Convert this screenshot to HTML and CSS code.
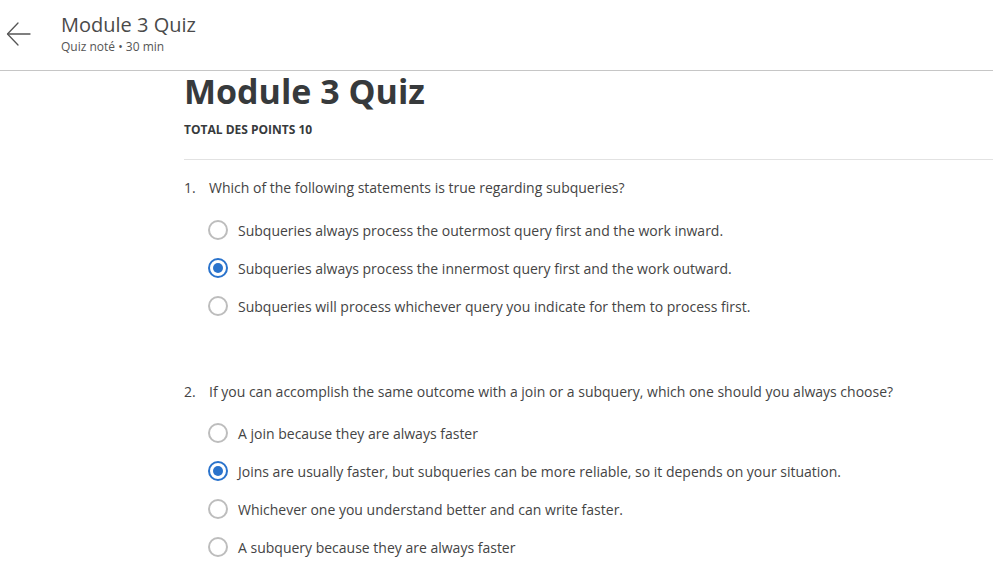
FILE: index.html
```html
<!DOCTYPE html>
<html lang="fr">
<head>
<meta charset="utf-8">
<title>Module 3 Quiz</title>
<link rel="stylesheet" href="styles.css">
</head>
<body>
<header class="topbar">
  <button class="back" aria-label="Retour">
    <svg width="26" height="26" viewBox="0 0 26 26" fill="none" stroke="#555" stroke-width="1.3" stroke-linecap="round" stroke-linejoin="round">
      <path d="M24 13H2"/>
      <path d="M12 2L1.5 13L12 24"/>
    </svg>
  </button>
  <div class="topbar-text">
    <div class="topbar-title">Module 3 Quiz</div>
    <div class="topbar-sub">Quiz noté • 30 min</div>
  </div>
</header>
<main class="content">
  <h1 class="quiz-title">Module 3 Quiz</h1>
  <div class="points">TOTAL DES POINTS 10</div>
  <hr class="sep">
  <section class="question q1">
    <div class="q-head"><span class="q-num">1.</span><span class="q-text">Which of the following statements is true regarding subqueries?</span></div>
    <ul class="options">
      <li class="option"><span class="radio"></span><span>Subqueries always process the outermost query first and the work inward.</span></li>
      <li class="option"><span class="radio checked"></span><span>Subqueries always process the innermost query first and the work outward.</span></li>
      <li class="option"><span class="radio"></span><span>Subqueries will process whichever query you indicate for them to process first.</span></li>
    </ul>
  </section>
  <section class="question q2">
    <div class="q-head"><span class="q-num">2.</span><span class="q-text">If you can accomplish the same outcome with a join or a subquery, which one should you always choose?</span></div>
    <ul class="options">
      <li class="option"><span class="radio"></span><span>A join because they are always faster</span></li>
      <li class="option"><span class="radio checked"></span><span>Joins are usually faster, but subqueries can be more reliable, so it depends on your situation.</span></li>
      <li class="option"><span class="radio"></span><span>Whichever one you understand better and can write faster.</span></li>
      <li class="option"><span class="radio"></span><span>A subquery because they are always faster</span></li>
    </ul>
  </section>
</main>
</body>
</html>
```

FILE: styles.css
```css
* { box-sizing: border-box; }
html, body { margin: 0; padding: 0; background: #fff; }
body {
  font-family: "Open Sans", "Noto Sans", sans-serif;
  color: #444;
  overflow: hidden;
}
.topbar {
  height: 71px;
  border-bottom: 1px solid #c6c6c6;
  display: flex;
  align-items: flex-start;
}
.back {
  border: 0;
  background: none;
  padding: 0;
  margin: 21px 0 0 6px;
  width: 26px;
  height: 26px;
  display: flex;
}
.topbar-text {
  margin: 12px 0 0 29px;
  display: flex;
  flex-direction: column;
}
.topbar-title {
  font-size: 20px;
  line-height: 26px;
  color: #4a4a4a;
}
.topbar-sub {
  font-size: 12px;
  line-height: 16px;
  margin-top: 1px;
  color: #555;
}
.content {
  padding-left: 184px;
}
.quiz-title {
  margin: 0;
  font-size: 34px;
  line-height: 40px;
  font-weight: 700;
  color: #373a3c;
}
.points {
  margin-top: 11px;
  font-size: 12px;
  line-height: 16px;
  font-weight: 700;
  color: #373a3c;
}
.sep {
  margin: 21px 0 0;
  border: 0;
  border-top: 1px solid #e2e2e2;
  height: 0;
}
.question { margin-top: 18px; }
.q2 { margin-top: 66px; }
.q-head {
  display: flex;
  font-size: 14px;
  line-height: 20px;
}
.q-num { width: 25px; }
.options {
  list-style: none;
  margin: 22px 0 0 24px;
  padding: 0;
  display: flex;
  flex-direction: column;
  gap: 18px;
}
.q2 .options { margin-top: 21px; }
.option {
  display: flex;
  align-items: center;
  gap: 10px;
  height: 20px;
  font-size: 14px;
  color: #444;
}
.radio {
  width: 20px;
  height: 20px;
  border-radius: 50%;
  border: 2px solid #bdbdbd;
  flex: none;
  display: flex;
  align-items: center;
  justify-content: center;
}
.radio.checked { border-color: #2a73cc; }
.radio.checked::after {
  content: "";
  width: 10px;
  height: 10px;
  border-radius: 50%;
  background: #2a73cc;
}
```
